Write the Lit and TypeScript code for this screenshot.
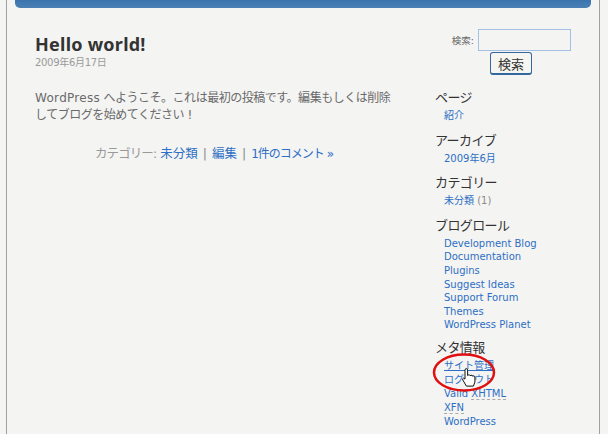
import { LitElement, html, css } from "lit";
import { customElement } from "lit/decorators.js";

const blogroll = ["Development Blog", "Documentation", "Plugins", "Suggest Ideas", "Support Forum", "Themes", "WordPress Planet"];

@customElement("app-root")
export class AppRoot extends LitElement {
  static styles = css`
    :host {
      display: block;
      width: 608px;
      height: 434px;
      overflow: hidden;
      position: relative;
      background: #f4f4f3;
      font-family: "DejaVu Sans", "Noto Sans CJK JP", sans-serif;
      color: #666;
    }
    .page {
      box-sizing: border-box;
      margin-left: 6px;
      width: 594px;
      height: 434px;
      border-left: 1px solid #a0a0a0;
      border-right: 1px solid #a0a0a0;
      padding: 0 8px;
    }
    .header {
      height: 8px;
      background: linear-gradient(#3b75ae, #4a80b4);
      border-radius: 0 0 5px 5px;
    }
    .content { display: flex; }
    .main { width: 420px; box-sizing: border-box; padding: 26px 0 0 20px; }
    h2 {
      margin: 0;
      font-family: "Noto Sans", sans-serif;
      font-size: 18px;
      line-height: 20px;
      font-weight: bold;
      color: #333;
      letter-spacing: 0.25px;
    }
    .date { font-size: 10px; line-height: 13px; color: #9a9a9a; margin-top: 2px; letter-spacing: -0.3px; }
    .body { margin: 21px 0 0; width: 362px; font-size: 12px; line-height: 17px; color: #6a6a6a; letter-spacing: -0.48px; }
    .latin { letter-spacing: 0.3px; }
    .meta { margin-top: 22px; text-align: center; font-size: 12.5px; line-height: 16px; color: #999; width: 358px; }
    .tight { letter-spacing: -0.9px; }
    .cmt { font-size: 12px; letter-spacing: -1px; }
    a { color: #2d6fc4; text-decoration: none; }
    .sep { color: #888; margin: 0 5px; }
    .side { width: 155px; padding-top: 21px; position: relative; }
    .search { display: flex; flex-direction: column; align-items: flex-end; width: 136px; }
    .search-row { display: flex; align-items: center; gap: 4px; font-size: 9.5px; color: #666; }
    .input {
      box-sizing: border-box;
      width: 93px;
      height: 22px;
      border: 1px solid #a5c0e4;
      background: #f4f4f3;
    }
    .btn {
      box-sizing: border-box;
      margin: 1px 39px 0 0;
      width: 42px;
      height: 23px;
      padding: 0;
      border: 1px solid #34689f;
      border-bottom-width: 2px;
      border-radius: 3px;
      background: #f6f5f1;
      color: #333;
      font: 13px "DejaVu Sans", "Noto Sans CJK JP", sans-serif;
    }
    .widgets { margin-top: 13px; display: flex; flex-direction: column; }
    h3 { margin: 0; font-size: 13px; line-height: 19px; font-weight: normal; color: #333; letter-spacing: -0.6px; }
    ul { list-style: none; margin: 2px 0 8px; padding: 0 0 0 9px; font-size: 10px; line-height: 13.6px; color: #8a8a8a; }
    .roll { margin-bottom: 6px; }
    .wp li { line-height: 14px; }
    .ul { text-decoration: underline; }
    abbr { text-decoration: none; border-bottom: 1px dashed #aaa; }
    .overlay { position: absolute; left: 430px; top: 350px; width: 72px; height: 44px; }
  `;

  render() {
    return html`
      <div class="page">
        <div class="header"></div>
        <div class="content">
          <div class="main">
            <h2>Hello world!</h2>
            <div class="date">2009年6月17日</div>
            <p class="body"><span class="latin">WordPress</span> へようこそ。これは最初の投稿です。編集もしくは削除してブログを始めてください !</p>
            <div class="meta"><span class="tight">カテゴリー:</span> <a href="#">未分類</a><span class="sep">|</span><a href="#">編集</a><span class="sep">|</span><a class="cmt" href="#">1件のコメント »</a></div>
          </div>
          <div class="side">
            <div class="search">
              <div class="search-row"><span>検索:</span><div class="input"></div></div>
              <button class="btn">検索</button>
            </div>
            <div class="widgets">
              <h3>ページ</h3>
              <ul><li><a href="#">紹介</a></li></ul>
              <h3>アーカイブ</h3>
              <ul><li><a href="#">2009年6月</a></li></ul>
              <h3>カテゴリー</h3>
              <ul><li><a href="#">未分類</a> (1)</li></ul>
              <h3>ブログロール</h3>
              <ul class="roll">${blogroll.map((b) => html`<li><a href="#">${b}</a></li>`)}</ul>
              <h3>メタ情報</h3>
              <ul class="wp">
                <li><a class="ul" href="#">サイト管理</a></li>
                <li><a href="#">ログアウト</a></li>
                <li><a href="#">Valid <abbr>XHTML</abbr></a></li>
                <li><a href="#"><abbr>XFN</abbr></a></li>
                <li><a href="#">WordPress</a></li>
              </ul>
            </div>
          </div>
        </div>
      </div>
      <svg class="overlay" viewBox="0 0 72 44">
        <ellipse cx="34" cy="22.5" rx="30" ry="18" fill="none" stroke="#e01010" stroke-width="2.5" />
        <path d="M35 20.5 q0-2 1.3-2 q1.3 0 1.3 2 v5 l1-.6 q1.2-.3 1.5 .8 l1-.5 q1.2 -.2 1.5 1 l1-.3 q1.2 0 1.3 1.2 v5 l-1.5 4 h-7 l-3.5-6 q-.8-1.5 .5-2 l1.6 1 z" fill="#fff" stroke="#111" stroke-width="1" />
      </svg>
    `;
  }
}
